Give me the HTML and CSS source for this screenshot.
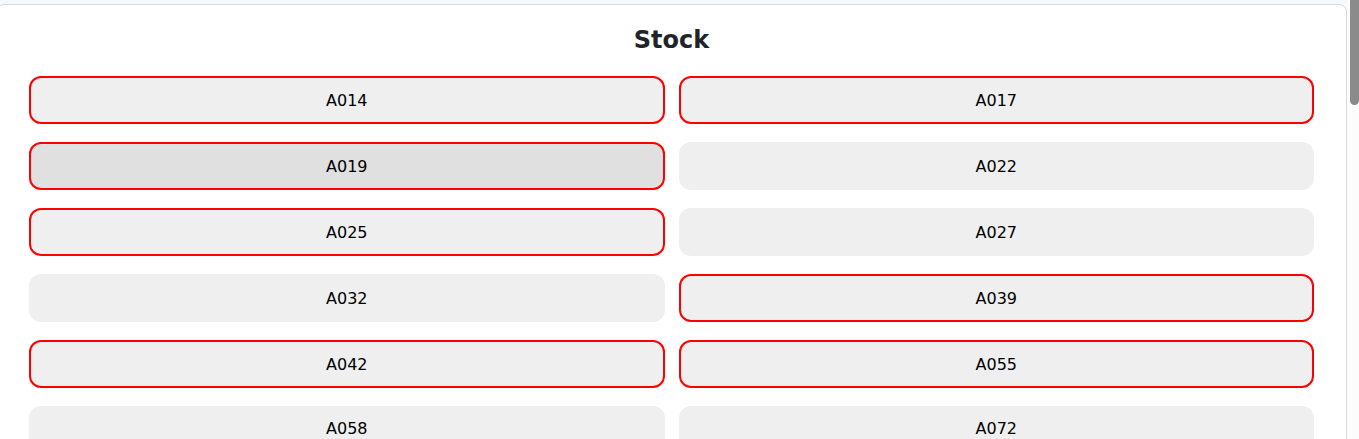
FILE: index.html
```html
<!DOCTYPE html>
<html lang="en">
<head>
<meta charset="utf-8">
<meta name="viewport" content="width=device-width, initial-scale=1">
<title>Stock</title>
<link rel="stylesheet" href="styles.css">
</head>
<body>
<div class="page">
  <main class="panel">
    <h1 class="title">Stock</h1>
    <div class="stock-grid">
      <button type="button" class="item marked">A014</button>
      <button type="button" class="item marked">A017</button>
      <button type="button" class="item marked active">A019</button>
      <button type="button" class="item">A022</button>
      <button type="button" class="item marked">A025</button>
      <button type="button" class="item">A027</button>
      <button type="button" class="item">A032</button>
      <button type="button" class="item marked">A039</button>
      <button type="button" class="item marked">A042</button>
      <button type="button" class="item marked">A055</button>
      <button type="button" class="item">A058</button>
      <button type="button" class="item">A072</button>
    </div>
  </main>
  <div class="scroll-track"><div class="scroll-thumb"></div></div>
</div>
</body>
</html>
```
FILE: styles.css
```css
* {
  box-sizing: border-box;
}

body {
  margin: 0;
  background: #f7f8fa;
  color: #212529;
  font-family: Verdana, "DejaVu Sans", sans-serif;
  font-size: 16px;
  line-height: 24px;
}

.page {
  display: flex;
  height: 100vh;
  overflow: hidden;
}

.panel {
  flex: 1;
  align-self: flex-start;
  min-height: 100vh;
  margin: 4px 0 0 -4px;
  padding: 20px 32px;
  border: 1px solid #d9dadc;
  border-radius: 8px;
  background: #fff;
}

.title {
  margin: 0 0 20px;
  font-size: 24px;
  font-weight: 700;
  line-height: 31px;
  text-align: center;
}

.stock-grid {
  display: grid;
  grid-template-columns: 1fr 1fr;
  gap: 18px 14px;
}

.item {
  padding: 11px 10px 9px;
  border: 0;
  border-radius: 12px;
  background: #efefef;
  color: #000;
  font: inherit;
  cursor: pointer;
}

.marked {
  border: 2px solid #f00;
}

.active {
  background: #e0e0e0;
}

.scroll-track {
  width: 12px;
  padding-left: 3px;
  background: #fcfcfc;
}

.scroll-thumb {
  height: 105px;
  border-radius: 0 0 5px 5px;
  background: #8b8b8b;
}
```
